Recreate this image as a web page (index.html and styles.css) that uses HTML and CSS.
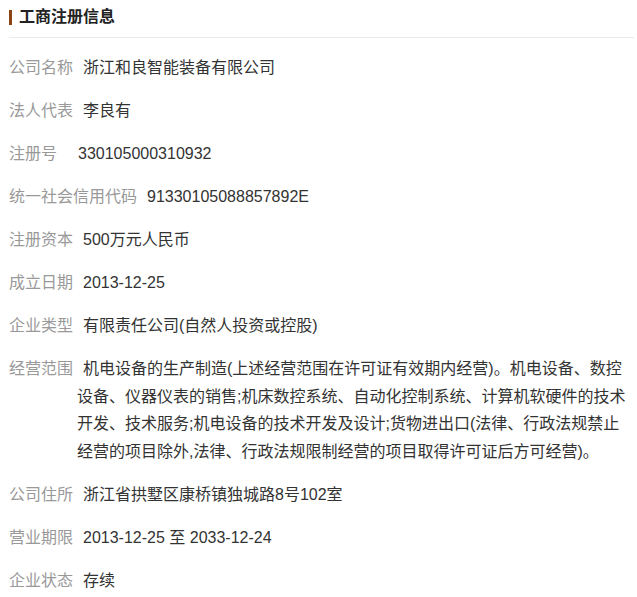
FILE: index.html
```html
<!DOCTYPE html>
<html lang="zh-CN">
<head>
  <meta charset="UTF-8" />
  <meta name="viewport" content="width=device-width, initial-scale=1.0"/>
  <title>工商注册信息</title>
  <link rel="stylesheet" href="styles.css">
</head>
<body>

  <section class="panel">
    <h2 class="panel-title">工商注册信息</h2>

    <div class="info-list">
      <div class="info-row">
        <span class="label">公司名称</span>
        <span class="value">浙江和良智能装备有限公司</span>
      </div>
      <div class="info-row">
        <span class="label">法人代表</span>
        <span class="value">李良有</span>
      </div>
      <div class="info-row">
        <span class="label label-short">注册号</span>
        <span class="value">330105000310932</span>
      </div>
      <div class="info-row">
        <span class="label">统一社会信用代码</span>
        <span class="value">91330105088857892E</span>
      </div>
      <div class="info-row">
        <span class="label">注册资本</span>
        <span class="value">500万元人民币</span>
      </div>
      <div class="info-row">
        <span class="label">成立日期</span>
        <span class="value">2013-12-25</span>
      </div>
      <div class="info-row">
        <span class="label">企业类型</span>
        <span class="value">有限责任公司(自然人投资或控股)</span>
      </div>
      <div class="info-row">
        <span class="label">经营范围</span>
        <span class="value">机电设备的生产制造(上述经营范围在许可证有效期内经营)。机电设备、数控设备、仪器仪表的销售;机床数控系统、自动化控制系统、计算机软硬件的技术开发、技术服务;机电设备的技术开发及设计;货物进出口(法律、行政法规禁止经营的项目除外,法律、行政法规限制经营的项目取得许可证后方可经营)。</span>
      </div>
      <div class="info-row">
        <span class="label">公司住所</span>
        <span class="value">浙江省拱墅区康桥镇独城路8号102室</span>
      </div>
      <div class="info-row">
        <span class="label">营业期限</span>
        <span class="value">2013-12-25 至 2033-12-24</span>
      </div>
      <div class="info-row">
        <span class="label">企业状态</span>
        <span class="value">存续</span>
      </div>
    </div>
  </section>

</body>
</html>
```

FILE: styles.css
```css
* {
  margin: 0;
  padding: 0;
  box-sizing: border-box;
}

body {
  font-family: "Liberation Sans", "Noto Sans CJK SC", sans-serif;
  background: #fff;
  color: #333;
}

.panel {
  padding: 0 3px 0 9px;
}

.panel-title {
  display: flex;
  align-items: center;
  gap: 7px;
  padding: 5px 0 8px;
  line-height: 24px;
  font-size: 16px;
  font-weight: bold;
  color: #222;
  border-bottom: 1px solid #ebebeb;
}

.panel-title::before {
  content: "";
  width: 3px;
  height: 15px;
  background: #8b4513;
}

.info-list {
  padding-top: 16px;
}

.info-row {
  display: flex;
  font-size: 16px;
  line-height: 27.5px;
  margin-bottom: 15.5px;
}

.label {
  flex: none;
  color: #999;
  margin-right: 4px;
}

.label-short {
  margin-right: 15px;
}

.value {
  flex: 1;
  text-indent: 6px;
  color: #333;
}
```
